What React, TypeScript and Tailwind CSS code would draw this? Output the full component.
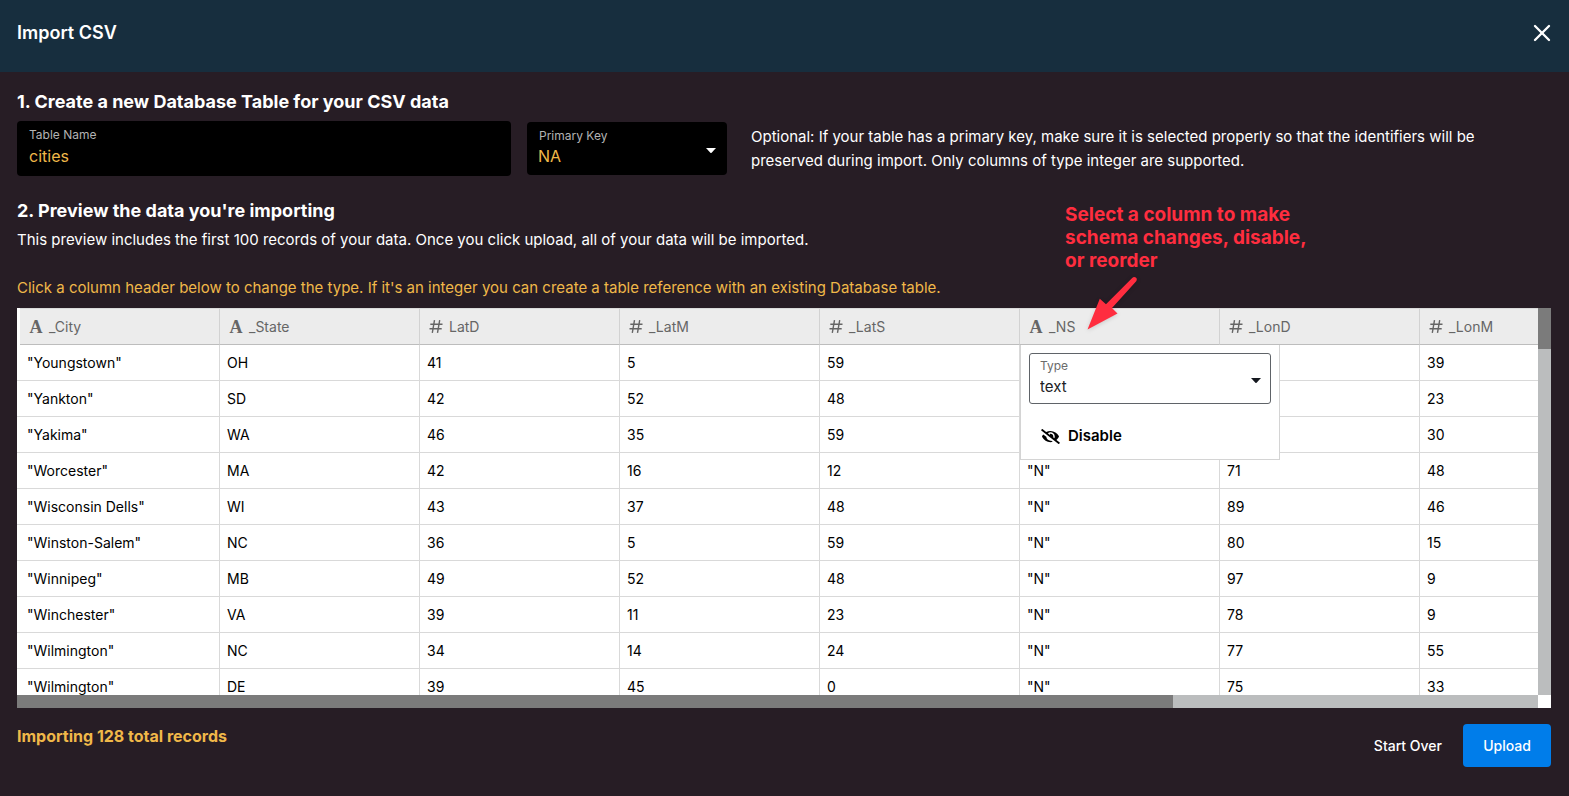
import { X } from "lucide-react";

type Kind = "text" | "number";

const columns: { name: string; kind: Kind }[] = [
  { name: "_City", kind: "text" },
  { name: "_State", kind: "text" },
  { name: "LatD", kind: "number" },
  { name: "_LatM", kind: "number" },
  { name: "_LatS", kind: "number" },
  { name: "_NS", kind: "text" },
  { name: "_LonD", kind: "number" },
  { name: "_LonM", kind: "number" },
];

const rows = [
  ['"Youngstown"', "OH", "41", "5", "59", "", "", "39"],
  ['"Yankton"', "SD", "42", "52", "48", "", "", "23"],
  ['"Yakima"', "WA", "46", "35", "59", "", "", "30"],
  ['"Worcester"', "MA", "42", "16", "12", '"N"', "71", "48"],
  ['"Wisconsin Dells"', "WI", "43", "37", "48", '"N"', "89", "46"],
  ['"Winston-Salem"', "NC", "36", "5", "59", '"N"', "80", "15"],
  ['"Winnipeg"', "MB", "49", "52", "48", '"N"', "97", "9"],
  ['"Winchester"', "VA", "39", "11", "23", '"N"', "78", "9"],
  ['"Wilmington"', "NC", "34", "14", "24", '"N"', "77", "55"],
  ['"Wilmington"', "DE", "39", "45", "0", '"N"', "75", "33"],
];

function KindIcon({ kind }: { kind: Kind }) {
  if (kind === "text") {
    return (
      <span aria-hidden="true" className="w-[14px] text-center font-['Liberation_Serif',serif] text-lg font-bold leading-5">
        A
      </span>
    );
  }
  return (
    <svg aria-hidden="true" className="h-[14px] w-[14px] shrink-0" viewBox="0 0 14 14" fill="none" stroke="currentColor" strokeWidth="1.4">
      <path d="M5.500 .2 3.300 12.800M10.700 .2 8.500 12.800M1.300 4.200H13.500M.5 8.800H12.700" />
    </svg>
  );
}

function Caret({ className }: { className: string }) {
  return (
    <svg aria-hidden="true" className={className} viewBox="0 0 10 5">
      <path d="M0 0H10L5.6 4.7Q5 5.2 4.4 4.7Z" fill="currentColor" />
    </svg>
  );
}

function EyeOff() {
  return (
    <svg aria-hidden="true" className="h-[15px] w-[19px] shrink-0" viewBox="0 0 640 512" fill="currentColor">
      <path d="M320 400c-75.850 0-137.250-58.710-142.900-133.110L72.200 185.820c-13.790 17.300-26.480 35.590-36.720 55.590a32.350 32.350 0 0 0 0 29.190C89.710 376.410 197.070 448 320 448c26.910 0 52.870-4 77.890-10.460L346 397.390a144.130 144.130 0 0 1-26 2.610zm313.820 58.100l-110.550-85.440a331.250 331.250 0 0 0 81.250-102.070 32.350 32.350 0 0 0 0-29.190C550.290 135.590 442.930 64 320 64a308.150 308.150 0 0 0-147.320 37.700L45.460 3.370A16 16 0 0 0 23 6.180L3.370 31.450A16 16 0 0 0 6.180 53.900l588.360 454.730a16 16 0 0 0 22.460-2.810l19.640-25.270a16 16 0 0 0-2.820-22.450zM450.190 314.820l-39.300-30.380A94.750 94.750 0 0 0 416 256a94.760 94.760 0 0 0-121.310-92.210A47.650 47.650 0 0 1 304 192a46.640 46.640 0 0 1-1.540 10l-73.610-56.890A142.310 142.310 0 0 1 320 112a143.920 143.920 0 0 1 144 144c0 21.630-5.290 41.790-13.810 58.820z" />
    </svg>
  );
}

function ColumnMenu() {
  return (
    <div className="absolute left-0 top-full z-10 h-[115px] w-[260px] border border-t-0 border-[#d4d4d4] bg-white p-2 text-black">
      <div className="relative">
        <label htmlFor="column-type" className="absolute left-[11px] top-[6px] text-xs font-normal leading-[14px] text-[#6b6b6b]">
          Type
        </label>
        <select
          id="column-type"
          className="block h-[51px] w-full appearance-none rounded-[3px] border border-[#5f6368] bg-white pb-0 pl-[10px] pt-4 text-[15px] font-normal text-[#202124]"
        >
          <option>text</option>
        </select>
        <Caret className="pointer-events-none absolute right-[10px] top-[25px] h-[5px] w-[10px] text-[#14181f]" />
      </div>
      <button type="button" className="mt-5 flex h-6 items-center gap-2 pl-3 text-[15px] font-semibold">
        <EyeOff />
        Disable
      </button>
    </div>
  );
}

function Callout() {
  return (
    <div className="pointer-events-none absolute bottom-full right-[238px] z-20 w-[248px]">
      <p className="mb-[36px] text-[19px] font-bold leading-[23px] text-[#ff2d3f]">
        Select a column to make schema changes, disable, or reorder
      </p>
      <svg aria-hidden="true" className="absolute left-[20px] top-[70px] h-[60px] w-[60px] drop-shadow-sm" viewBox="0 0 60 60">
        <path d="M47.200 5 Q49 3.200 50.800 4.600 T51.200 8.200 L27 35 L32.500 40.500 L2.500 56.500 L14.800 25.800 L21 31.300 Z" fill="#ff2d3f" />
      </svg>
    </div>
  );
}

export default function App() {
  return (
    <main className="flex min-h-screen flex-col bg-[#271d25] font-['Inter',sans-serif] text-white">
      <header className="flex h-[72px] items-start justify-between bg-[#172e3e] px-[17px] pt-5">
        <h1 className="text-lg font-semibold leading-[26px]">Import CSV</h1>
        <button type="button" aria-label="Close" className="flex h-[26px] w-5 items-center justify-center">
          <X className="h-7 w-7 shrink-0" strokeWidth={2} />
        </button>
      </header>

      <div className="pb-7 pl-[17px] pr-[18px] pt-4">
        <h2 className="text-lg font-bold leading-7">1. Create a new Database Table for your CSV data</h2>
        <div className="mt-[5px] flex items-center">
          <div className="relative w-[494px] shrink-0">
            <label htmlFor="table-name" className="absolute left-3 top-[6px] text-xs leading-4 text-[#b3b3b3]">
              Table Name
            </label>
            <input
              id="table-name"
              defaultValue="cities"
              className="block h-[55px] w-full rounded bg-black px-3 pt-[15px] text-base text-[#f0b849] outline-none"
            />
          </div>
          <div className="relative ml-4 w-[200px] shrink-0">
            <label htmlFor="primary-key" className="absolute left-3 top-[6px] text-xs leading-4 text-[#b3b3b3]">
              Primary Key
            </label>
            <select
              id="primary-key"
              className="block h-[53px] w-full appearance-none rounded bg-black pl-[11px] pt-[15px] text-base text-[#f0b849] outline-none"
            >
              <option>NA</option>
            </select>
            <Caret className="pointer-events-none absolute right-[11px] top-[26px] h-[5px] w-[10px] text-white" />
          </div>
          <p className="ml-6 max-w-[760px] text-[15px] leading-6">
            Optional: If your table has a primary key, make sure it is selected properly so that the identifiers will be
            preserved during import. Only columns of type integer are supported.
          </p>
        </div>

        <h2 className="mt-[21px] text-lg font-bold leading-7">2. Preview the data you're importing</h2>
        <p className="mt-[3px] text-[15px] leading-6">
          This preview includes the first 100 records of your data. Once you click upload, all of your data will be
          imported.
        </p>
        <p className="mt-6 text-[15px] leading-6 text-[#f0b849]">
          Click a column header below to change the type. If it's an integer you can create a table reference with an
          existing Database table.
        </p>

        <div className="relative mt-2">
          <Callout />
          <div className="grid grid-cols-[minmax(0,1fr)_13px] grid-rows-[387px_13px] bg-white">
            <div className="overflow-hidden">
              <table className="w-[1603px] table-fixed border-separate border-spacing-0 text-left text-sm">
                <colgroup>
                  <col className="w-[203px]" />
                </colgroup>
                <thead>
                  <tr>
                    {columns.map((column, i) => (
                      <th
                        key={column.name}
                        className={
                          i === 0
                            ? "h-[37px] border-l-[3px] border-white p-0 font-normal"
                            : "relative h-[37px] p-0 font-normal"
                        }
                      >
                        <button
                          type="button"
                          className="flex h-[37px] w-full items-center gap-[6px] border-b border-r border-t border-b-[#bdbdbd] border-r-[#d2d2d2] border-t-[#dadada] bg-[#ececec] pl-[9px] text-[#666]"
                        >
                          <KindIcon kind={column.kind} />
                          {column.name}
                        </button>
                        {column.name === "_NS" && <ColumnMenu />}
                      </th>
                    ))}
                  </tr>
                </thead>
                <tbody>
                  {rows.map((row, r) => (
                    <tr key={r}>
                      {row.map((value, c) => (
                        <td
                          key={c}
                          className={
                            c === 0
                              ? "h-9 border-b border-r border-[#d9d9d9] py-0 pl-[10px] text-black"
                              : "h-9 border-b border-r border-[#d9d9d9] py-0 pl-[7px] text-black"
                          }
                        >
                          {value}
                        </td>
                      ))}
                    </tr>
                  ))}
                </tbody>
              </table>
            </div>
            <div className="bg-[#bbbdbe]">
              <div className="h-[41px] bg-[#7b7b7b]" />
            </div>
            <div className="bg-[#bbbdbe]">
              <div className="h-full w-[76%] bg-[#7b7b7b]" />
            </div>
          </div>
        </div>

        <footer className="mt-4 flex items-start justify-between">
          <p className="text-base font-bold leading-6 text-[#f0b849]">Importing 128 total records</p>
          <div className="flex items-center gap-[21px] text-sm font-medium">
            <button type="button">Start Over</button>
            <button type="button" className="h-[43px] w-[88px] rounded bg-[#007dea]">
              Upload
            </button>
          </div>
        </footer>
      </div>
    </main>
  );
}
